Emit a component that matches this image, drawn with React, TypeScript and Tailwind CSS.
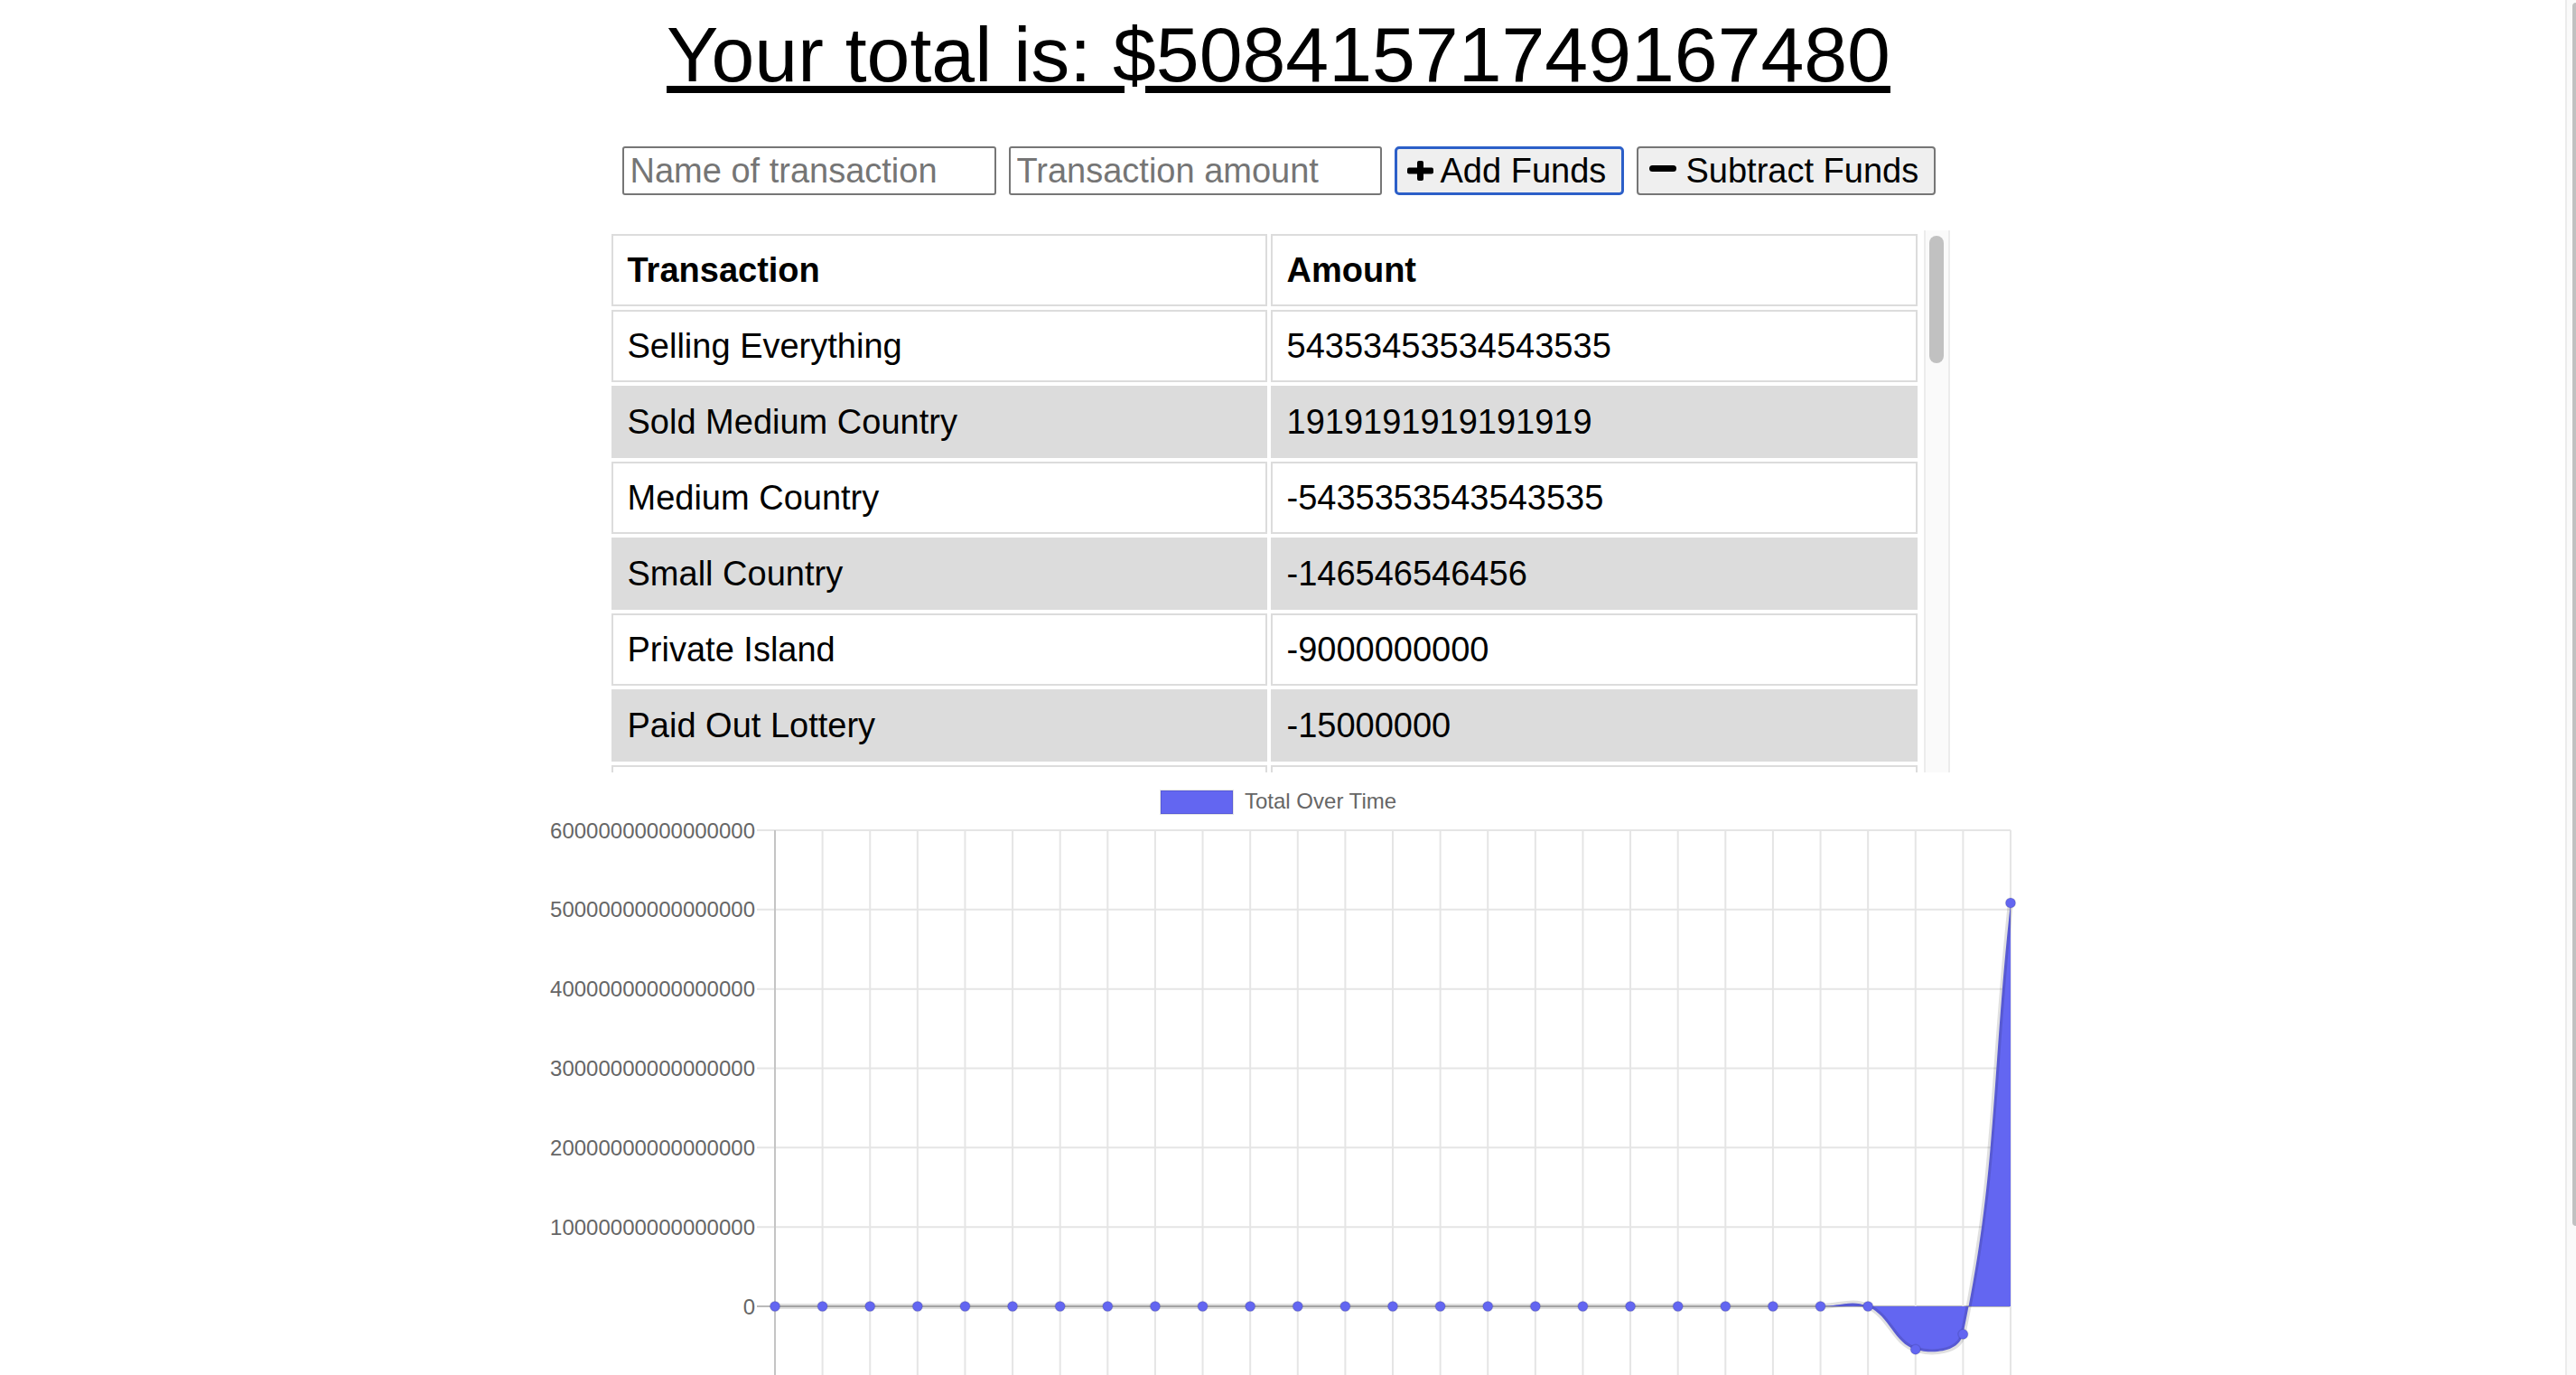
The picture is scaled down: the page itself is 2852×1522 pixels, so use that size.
import React from 'react';

type Row = { name: string; amount: string };

const rows: Row[] = [
  { name: 'Selling Everything', amount: '54353453534543535' },
  { name: 'Sold Medium Country', amount: '1919191919191919' },
  { name: 'Medium Country', amount: '-5435353543543535' },
  { name: 'Small Country', amount: '-146546546456' },
  { name: 'Private Island', amount: '-9000000000' },
  { name: 'Paid Out Lottery', amount: '-15000000' },
  { name: '\u00a0', amount: '\u00a0' },
];

// chart geometry (svg coords)
const X0 = 262;
const STEP = 52.615;
const Y0 = 591;
const UNIT = 87.83; // px per 1e16
const RIGHT = X0 + 26 * STEP;

// running total, in units of 1e16
const totals = [...Array(24).fill(0), -0.5431, -0.3512, 5.0842];
const pts = totals.map((v, i) => ({ x: X0 + i * STEP, y: Y0 - v * UNIT }));

function splinePath() {
  const cps = pts.map((p, i) => {
    const prev = pts[i - 1] ?? p;
    const next = pts[i + 1] ?? p;
    const d01 = Math.hypot(p.x - prev.x, p.y - prev.y);
    const d12 = Math.hypot(next.x - p.x, next.y - p.y);
    const s01 = d01 + d12 ? d01 / (d01 + d12) : 0;
    const s12 = d01 + d12 ? d12 / (d01 + d12) : 0;
    const fa = 0.4 * s01;
    const fb = 0.4 * s12;
    return {
      c1: { x: p.x - fa * (next.x - prev.x), y: p.y - fa * (next.y - prev.y) },
      c2: { x: p.x + fb * (next.x - prev.x), y: p.y + fb * (next.y - prev.y) },
    };
  });
  let d = `M${pts[0].x},${pts[0].y}`;
  for (let i = 1; i < pts.length; i++) {
    const a = cps[i - 1].c2;
    const b = cps[i].c1;
    d += ` C${a.x},${a.y} ${b.x},${b.y} ${pts[i].x},${pts[i].y}`;
  }
  return d;
}

const yTicks = [6, 5, 4, 3, 2, 1, 0];

function Chart() {
  const line = splinePath();
  const area = `${line} L${pts[pts.length - 1].x},${Y0} L${pts[0].x},${Y0} Z`;
  return (
    <svg width="1640" height="700" viewBox="0 0 1640 700" className="block shrink-0">
      <rect x="689" y="20" width="80" height="26" fill="#6366f1" stroke="rgba(0,0,0,0.1)" strokeWidth="2" />
      <text x="782" y="31" fontSize="24" fill="#666" dominantBaseline="central">
        Total Over Time
      </text>

      {yTicks.map((t) => {
        const y = Y0 - t * UNIT;
        return (
          <g key={t}>
            <line x1="242" x2={RIGHT} y1={y} y2={y} stroke={t === 0 ? '#bababa' : '#e5e5e5'} strokeWidth="2" />
            <text x="240" y={y} fontSize="24" fill="#666" textAnchor="end" dominantBaseline="central">
              {t === 0 ? '0' : `${t}0000000000000000`}
            </text>
          </g>
        );
      })}
      <line x1="242" x2={RIGHT} y1={Y0 + UNIT} y2={Y0 + UNIT} stroke="#e5e5e5" strokeWidth="2" />
      {pts.map((p, i) => (
        <line key={i} x1={p.x} x2={p.x} y1={Y0 - 6 * UNIT} y2="700" stroke={i === 0 ? '#c4c4c4' : '#e5e5e5'} strokeWidth="2" />
      ))}

      <path d={area} fill="#6366f1" />
      <path d={line} fill="none" stroke="rgba(0,0,0,0.12)" strokeWidth="6" />
      {pts.map((p, i) => (
        <circle key={i} cx={p.x} cy={p.y} r="5.5" fill="#6366f1" stroke="rgba(0,0,0,0.1)" strokeWidth="1.5" />
      ))}
    </svg>
  );
}

export default function App() {
  return (
    <div className="flex h-screen w-full overflow-hidden bg-white font-['Liberation_Sans',Arial,sans-serif] text-black">
      <main className="flex flex-1 flex-col items-center pr-[9px]">
        <h1 className="mt-[12px] text-[86px] font-normal leading-[96px] underline">
          Your total is: $50841571749167480
        </h1>

        <form className="mt-[54px] flex h-[54px] items-center gap-[14px] text-[38px]">
          <input
            placeholder="Name of transaction"
            className="h-[54px] w-[414px] rounded-[3px] border-2 border-[#767676] bg-white px-[7px] placeholder:text-[#757575]"
          />
          <input
            placeholder="Transaction amount"
            className="h-[54px] w-[413px] rounded-[3px] border-2 border-[#767676] bg-white px-[7px] placeholder:text-[#757575]"
          />
          <button
            type="button"
            className="flex h-[54px] w-[254px] items-center gap-[8px] rounded-[5px] border-[3px] border-[#2c5fc8] bg-[#efefef] pl-[11px]"
          >
            <svg width="29" height="22" viewBox="0 0 29 22" className="shrink-0">
              <rect x="0" y="7.5" width="29" height="7" rx="2" fill="#000" />
              <rect x="11" y="0" width="7" height="22" rx="2" fill="#000" />
            </svg>
            <span>Add Funds</span>
          </button>
          <button
            type="button"
            className="flex h-[54px] w-[331px] items-center gap-[11px] rounded-[4px] border-2 border-[#767676] bg-[#efefef] pl-[12px]"
          >
            <svg width="30" height="7" viewBox="0 0 30 7" className="mb-[6px] shrink-0">
              <rect x="0" y="0" width="30" height="7" rx="3.5" fill="#000" />
            </svg>
            <span>Subtract Funds</span>
          </button>
        </form>

        <div className="mt-[39px] flex h-[600px] w-[1486px] shrink-0">
          <div className="flex-1 overflow-hidden">
            <table className="w-[1454px] table-fixed border-separate border-spacing-[4px] text-[38px]">
              <colgroup>
                <col className="w-[726px]" />
                <col className="w-[716px]" />
              </colgroup>
              <thead>
                <tr>
                  <th className="border-2 border-[#dcdcdc] px-[16px] text-left font-bold leading-[76px]">Transaction</th>
                  <th className="border-2 border-[#dcdcdc] px-[16px] text-left font-bold leading-[76px]">Amount</th>
                </tr>
              </thead>
              <tbody>
                {rows.map((r, i) => (
                  <tr key={i} className={i % 2 === 1 ? 'bg-[#dcdcdc]' : 'bg-white'}>
                    <td className="border-2 border-[#dcdcdc] px-[16px] leading-[76px]">{r.name}</td>
                    <td className="border-2 border-[#dcdcdc] px-[16px] leading-[76px]">{r.amount}</td>
                  </tr>
                ))}
              </tbody>
            </table>
          </div>
          <div className="flex w-[29px] shrink-0 justify-center border-x-2 border-[#ececec] bg-[#fafafa] pt-[6px]">
            <div className="h-[141px] w-[16px] rounded-full bg-[#c1c1c1]" />
          </div>
        </div>

        <Chart />
      </main>

      <div className="flex w-[12px] shrink-0 border-l-2 border-[#ececec] bg-[#fafafa] pl-[6px] pt-[3px]">
        <div className="h-[1354px] w-full rounded-l-[4px] bg-[#c1c1c1]" />
      </div>
    </div>
  );
}
